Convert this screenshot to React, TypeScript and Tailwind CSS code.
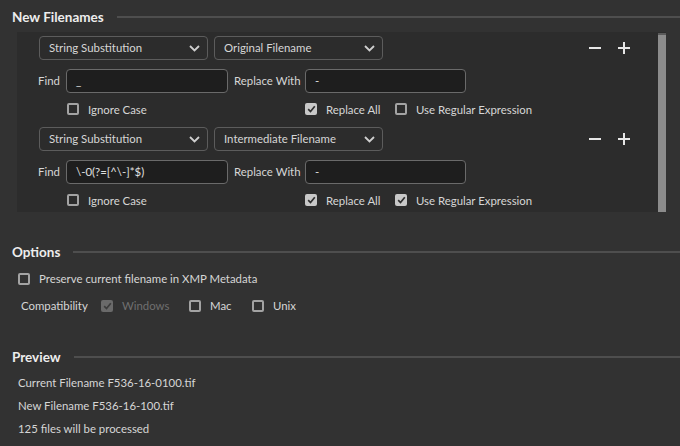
import React from "react";

const font = { fontFamily: "Lato, 'Open Sans', sans-serif" };

function Chevron() {
  return (
    <svg width="11" height="7" viewBox="0 0 11 7" className="shrink-0">
      <path d="M1 1 L5.5 5.5 L10 1" fill="none" stroke="#cfcfcf" strokeWidth="1.8" />
    </svg>
  );
}

function Dropdown({ label }: { label: string }) {
  return (
    <div className="flex h-[24px] w-[169px] items-center justify-between rounded-[4px] border border-[#5c5c5c] pl-[9px] pr-[7px] text-[11.4px] text-[#d6d6d6]">
      <span className="whitespace-nowrap">{label}</span>
      <Chevron />
    </div>
  );
}

function Check({ checked, disabled }: { checked?: boolean; disabled?: boolean }) {
  if (checked) {
    return (
      <div
        className={
          "flex h-[12px] w-[12px] shrink-0 items-center justify-center rounded-[2px] " +
          (disabled ? "bg-[#6a6a6a]" : "bg-[#c8c8c8]")
        }
      >
        <svg width="9" height="8" viewBox="0 0 9 8">
          <path
            d="M1.2 4.2 L3.5 6.5 L7.8 1.2"
            fill="none"
            stroke={disabled ? "#3c3c3c" : "#2e2e2e"}
            strokeWidth="1.7"
          />
        </svg>
      </div>
    );
  }
  return <div className="h-[12px] w-[12px] shrink-0 rounded-[2px] border-2 border-[#a3a3a3]" />;
}

function CheckItem({
  label,
  checked,
  disabled,
  className,
}: {
  label: string;
  checked?: boolean;
  disabled?: boolean;
  className?: string;
}) {
  return (
    <div className={"flex items-center gap-[9px] " + (className ?? "")}>
      <Check checked={checked} disabled={disabled} />
      <span className={"whitespace-nowrap " + (disabled ? "text-[#6f6f6f]" : "text-[#d6d6d6]")}>
        {label}
      </span>
    </div>
  );
}

function TextInput({ value, w }: { value: string; w: string }) {
  return (
    <div
      className={
        "flex h-[24px] items-center whitespace-nowrap rounded-[4px] border border-[#6a6a6a] bg-[#1e1e1e] pl-[9px] text-[11.4px] text-[#e0e0e0] " +
        w
      }
    >
      {value}
    </div>
  );
}

function Rule({
  source,
  find,
  regex,
}: {
  source: string;
  find: string;
  regex: boolean;
}) {
  return (
    <div className="flex flex-col">
      <div className="flex h-[24px] items-center">
        <div className="flex gap-[6px]">
          <Dropdown label="String Substitution" />
          <Dropdown label={source} />
        </div>
        <div className="flex-1" />
        <div className="mr-[28px] flex items-center gap-[17px]">
          <div className="h-[2px] w-[12px] bg-[#e6e6e6]" />
          <div className="relative h-[12px] w-[12px]">
            <div className="absolute left-0 top-[5px] h-[2px] w-[12px] bg-[#e6e6e6]" />
            <div className="absolute left-[5px] top-0 h-[12px] w-[2px] bg-[#e6e6e6]" />
          </div>
        </div>
      </div>
      <div className="mt-[9px] flex h-[24px] items-center text-[11.4px] text-[#d6d6d6]">
        <span className="ml-[-1px] w-[28px]">Find</span>
        <TextInput value={find} w="w-[162px]" />
        <span className="ml-[6px] w-[71px] whitespace-nowrap">Replace With</span>
        <TextInput value="-" w="w-[161px]" />
      </div>
      <div className="flex h-[33px] items-center pl-[28px] text-[11.4px]">
        <CheckItem label="Ignore Case" className="w-[238px]" />
        <CheckItem label="Replace All" checked className="w-[90px]" />
        <CheckItem label="Use Regular Expression" checked={regex} />
      </div>
    </div>
  );
}

function Heading({ title }: { title: string }) {
  return (
    <div className="flex h-[20px] items-center pl-[12px]">
      <span className="whitespace-nowrap text-[13.5px] font-bold text-[#ededed]">{title}</span>
      <div className="ml-[13px] h-[2px] flex-1 bg-[#4e4e4e]" />
    </div>
  );
}

export default function App() {
  return (
    <div className="h-[446px] w-[680px] overflow-hidden bg-[#323232] text-[11.4px]" style={font}>
      <div className="pt-[7px] pb-[5px]">
        <Heading title="New Filenames" />
      </div>
      <div className="ml-[17px] mr-[14px] flex h-[180px] overflow-hidden bg-[#2c2c2c]">
        <div className="flex flex-1 flex-col gap-[1px] pl-[22px] pt-[4px]">
          <Rule source="Original Filename" find="_" regex={false} />
          <Rule source="Intermediate Filename" find="\-0(?=[^\-]*$)" regex={true} />
        </div>
        <div className="flex w-[8px] flex-col pt-[1px]">
          <div className="h-[2px] bg-[#5a5a5a]" />
          <div className="flex-1 bg-[#8c8c8c]" />
        </div>
      </div>

      <div className="mt-[30px]">
        <Heading title="Options" />
      </div>
      <div className="mt-[7px] flex h-[20px] items-center pl-[18px]">
        <CheckItem label="Preserve current filename in XMP Metadata" />
      </div>
      <div className="mt-[7px] flex h-[20px] items-center pl-[21px] text-[#d6d6d6]">
        <span className="w-[80px] whitespace-nowrap">Compatibility</span>
        <CheckItem label="Windows" checked disabled className="w-[88px]" />
        <CheckItem label="Mac" className="w-[63px]" />
        <CheckItem label="Unix" />
      </div>

      <div className="mt-[31px]">
        <Heading title="Preview" />
      </div>
      <div className="mt-[4px] flex flex-col pl-[18px] text-[#d6d6d6]">
        <div className="h-[23px] leading-[23px]">Current Filename F536-16-0100.tif</div>
        <div className="h-[23px] leading-[23px]">New Filename F536-16-100.tif</div>
        <div className="h-[23px] leading-[23px]">125 files will be processed</div>
      </div>
    </div>
  );
}
